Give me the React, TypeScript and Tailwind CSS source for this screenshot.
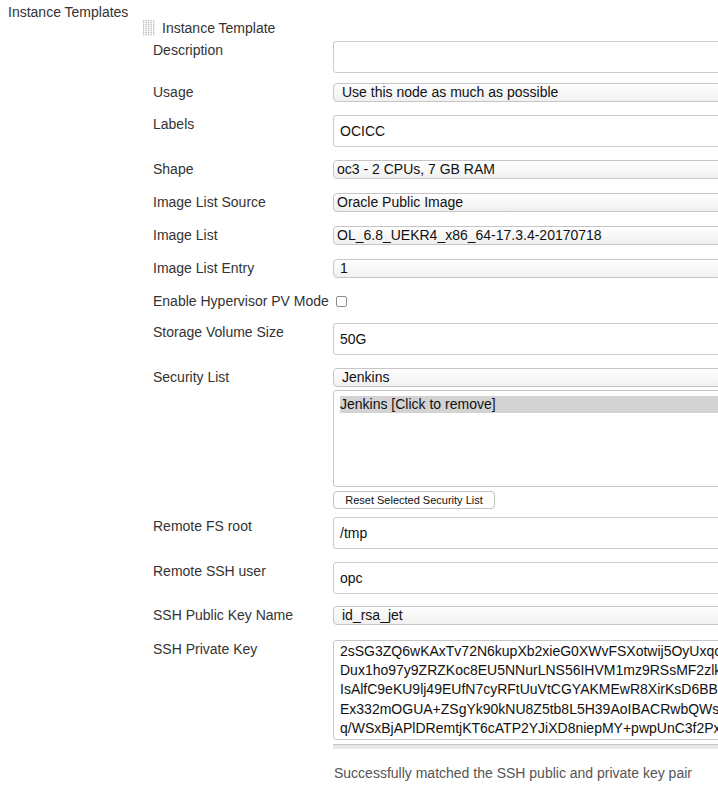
import React from "react";

const font = { fontFamily: '"Liberation Sans", Arial, Helvetica, sans-serif' };

const keyLines = [
  "2sSG3ZQ6wKAxTv72N6kupXb2xieG0XWvFSXotwij5OyUxqc",
  "Dux1ho97y9ZRZKoc8EU5NNurLNS56IHVM1mz9RSsMF2zlk",
  "IsAlfC9eKU9lj49EUfN7cyRFtUuVtCGYAKMEwR8XirKsD6BB",
  "Ex332mOGUA+ZSgYk90kNU8Z5tb8L5H39AoIBACRwbQWs",
  "q/WSxBjAPlDRemtjKT6cATP2YJiXD8niepMY+pwpUnC3f2Px",
];

function Handle() {
  const dots = [];
  for (let r = 0; r < 8; r++) {
    for (let c = 0; c < 5; c++) {
      dots.push(<rect key={`${r}-${c}`} x={c * 2.5} y={r * 2} width="1.3" height="1.3" fill="#b9b9b9" />);
    }
  }
  return (
    <svg width="12" height="16" viewBox="0 0 12 16" className="mr-[7px]">
      {dots}
    </svg>
  );
}

function Label({ children }: { children: React.ReactNode }) {
  return <div className="w-[190px] shrink-0 pl-[10px] leading-[18px] text-[#333]">{children}</div>;
}

function TextBox({ value = "" }: { value?: string }) {
  return (
    <div className="h-[32px] w-[420px] shrink-0 rounded-[3px] border border-[#cccccc] bg-white pl-[6px] leading-[30px] text-[#111]">
      {value}
    </div>
  );
}

function Select({ value, pad = "pl-[8px]" }: { value: string; pad?: string }) {
  return (
    <div
      className={`h-[19px] w-[420px] shrink-0 rounded-[4px] border border-[#c6c6c6] bg-gradient-to-b from-white to-[#f0f0f0] leading-[17px] text-[#111] ${pad}`}
    >
      {value}
    </div>
  );
}

function Row({ label, mt, children }: { label: string; mt: string; children: React.ReactNode }) {
  return (
    <div className={`flex items-start ${mt}`}>
      <Label>{label}</Label>
      <div className="flex flex-col">{children}</div>
    </div>
  );
}

export default function App() {
  return (
    <div className="h-[788px] w-[718px] overflow-hidden bg-white text-[14px]" style={font}>
      <div className="flex">
        {/* Outer label */}
        <div className="w-[143px] shrink-0 pl-[8px] pt-[3px] leading-[18px] text-[#333]">Instance Templates</div>

        {/* Template block */}
        <div className="flex flex-col">
          <div className="mt-[19px] flex h-[18px] items-center text-[#333]">
            <Handle />
            <span className="leading-[18px]">Instance Template</span>
          </div>

          <Row label="Description" mt="mt-[4px]">
            <TextBox />
          </Row>
          <Row label="Usage" mt="mt-[10px]">
            <Select value="Use this node as much as possible" />
          </Row>
          <Row label="Labels" mt="mt-[13px]">
            <TextBox value="OCICC" />
          </Row>
          <Row label="Shape" mt="mt-[13px]">
            <Select value="oc3 - 2 CPUs, 7 GB RAM" pad="pl-[3px]" />
          </Row>
          <Row label="Image List Source" mt="mt-[14px]">
            <Select value="Oracle Public Image" pad="pl-[3px]" />
          </Row>
          <Row label="Image List" mt="mt-[14px]">
            <Select value="OL_6.8_UEKR4_x86_64-17.3.4-20170718" pad="pl-[3px]" />
          </Row>
          <Row label="Image List Entry" mt="mt-[14px]">
            <Select value="1" pad="pl-[6px]" />
          </Row>
          <div className="mt-[14px] flex h-[18px] items-center">
            <div className="pl-[10px] leading-[18px] text-[#333]">Enable Hypervisor PV Mode</div>
            <div className="ml-[7px] h-[11px] w-[11px] rounded-[2px] border border-[#8f8f8f] bg-white" />
          </div>
          <Row label="Storage Volume Size" mt="mt-[13px]">
            <TextBox value="50G" />
          </Row>
          <Row label="Security List" mt="mt-[13px]">
            <Select value="Jenkins" />
            <div className="mt-[3px] h-[97px] w-[420px] rounded-[3px] border border-[#c6c6c6] bg-white pl-[6px] pt-[5px]">
              <div className="h-[17px] bg-[#d3d3d3] leading-[17px] text-[#111]">Jenkins [Click to remove]</div>
            </div>
            <div className="mt-[4px] flex">
              <button className="h-[18px] w-[162px] rounded-[4px] border border-[#c3c3c3] bg-white text-center text-[11px] leading-[16px] text-[#111]">
                Reset Selected Security List
              </button>
            </div>
          </Row>
          <Row label="Remote FS root" mt="mt-[8px]">
            <TextBox value="/tmp" />
          </Row>
          <Row label="Remote SSH user" mt="mt-[13px]">
            <TextBox value="opc" />
          </Row>
          <Row label="SSH Public Key Name" mt="mt-[12px]">
            <Select value="id_rsa_jet" pad="pl-[8px]" />
          </Row>
          <Row label="SSH Private Key" mt="mt-[15px]">
            <div className="h-[100px] w-[420px] overflow-hidden whitespace-pre rounded-[3px] border border-[#c6c6c6] bg-white pl-[6px] pt-[1px] leading-[19.2px] text-[#111]">
              {keyLines.join("\n")}
            </div>
            <div className="mt-[4px] h-[5px] w-[420px] border-t border-[#c4c4c4] bg-[#e8e8e8]" />
            <div className="mt-[15px] pl-[1px] leading-[18px] text-[#555]">
              Successfully matched the SSH public and private key pair
            </div>
          </Row>
        </div>
      </div>
    </div>
  );
}
